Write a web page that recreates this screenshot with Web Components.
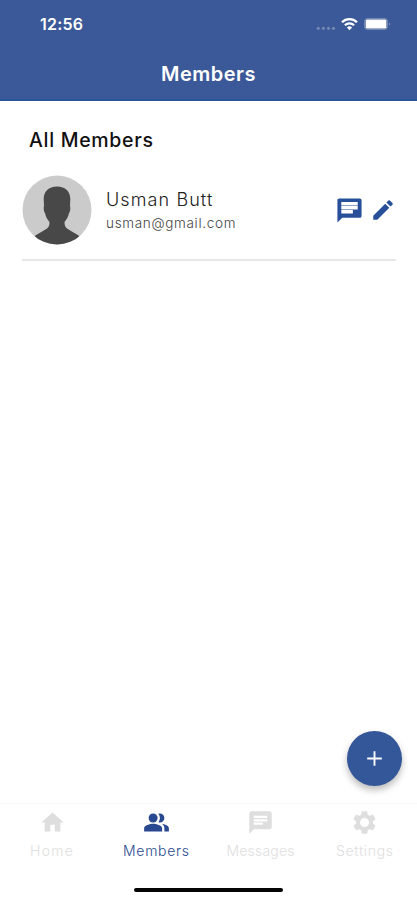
<!DOCTYPE html>
<html lang="en">
<head>
<meta charset="utf-8">
<title>Members</title>
<style>
  body {
    margin: 0;
    background: #fff;
    font-family: Inter, "Open Sans", sans-serif;
  }
</style>
</head>
<body>
<members-screen></members-screen>

<script>
const icons = {
  chat: '<path d="M20 2H4c-1.1 0-2 .9-2 2v18l4-4h14c1.1 0 2-.9 2-2V4c0-1.1-.9-2-2-2zM6 9h12v2H6V9zm8 5H6v-2h8v2zm4-6H6V6h12v2z"/>',
  message: '<path d="M20.500 2h-17C2.700 2 2 2.700 2 3.500V22l4-4h14.500c.8 0 1.500-.7 1.500-1.500v-13c0-.8-.7-1.500-1.500-1.500zM5.200 4.900h13.600v3H5.200zM5.200 8.200h13.600v3H5.200zM5.200 11.500h9.600v3H5.200z"/>',
  edit: '<path d="M3 17.25V21h3.75L17.81 9.94l-3.75-3.75L3 17.25zM20.71 7.04a1 1 0 0 0 0-1.41l-2.34-2.34a1 1 0 0 0-1.41 0l-1.83 1.83 3.75 3.75 1.83-1.83z"/>',
  home: '<path d="M10 20v-6h4v6h5v-8h3L12 3 2 12h3v8z"/>',
  people: '<path d="M16.67 13.13C18.04 14.06 19 15.32 19 17v3h4v-3c0-2.18-3.57-3.47-6.33-3.87z"/><circle cx="9" cy="8" r="4"/><path d="M15 12c2.21 0 4-1.79 4-4s-1.79-4-4-4c-.47 0-.91.1-1.33.24C14.5 5.27 15 6.58 15 8s-.5 2.73-1.33 3.76c.42.14.86.24 1.33.24zM9 13c-2.67 0-8 1.34-8 4v3h16v-3c0-2.66-5.33-4-8-4z"/>',
  settings: '<path d="M19.43 12.98c.04-.32.07-.64.07-.98s-.03-.66-.07-.98l2.11-1.65c.19-.15.24-.42.12-.64l-2-3.46c-.12-.22-.39-.3-.61-.22l-2.49 1c-.52-.4-1.08-.73-1.69-.98l-.38-2.65C14.46 2.18 14.25 2 14 2h-4c-.25 0-.46.18-.49.42l-.38 2.65c-.61.25-1.17.59-1.69.98l-2.49-1c-.23-.09-.49 0-.61.22l-2 3.46c-.13.22-.07.49.12.64l2.11 1.65c-.04.32-.07.65-.07.98s.03.66.07.98l-2.11 1.65c-.19.15-.24.42-.12.64l2 3.46c.12.22.39.3.61.22l2.49-1c.52.4 1.08.73 1.69.98l.38 2.65c.03.24.24.42.49.42h4c.25 0 .46-.18.49-.42l.38-2.65c.61-.25 1.17-.59 1.69-.98l2.49 1c.23.09.49 0 .61-.22l2-3.46c.12-.22.07-.49-.12-.64l-2.11-1.65zM12 16c-2.200 0-4-1.800-4-4s1.800-4 4-4 4 1.800 4 4-1.800 4-4 4z"/>',
  add: '<path d="M19 12.900h-6.100V19h-1.800v-6.100H5v-1.800h6.100V5h1.800v6.100H19z"/>',
};

class AppIcon extends HTMLElement {
  constructor() {
    super();
    this.attachShadow({ mode: 'open' });
  }

  connectedCallback() {
    this.shadowRoot.innerHTML = `
      <style>
        :host { display: block; width: 27px; height: 27px; flex: none; }
        svg { display: block; width: 100%; height: 100%; fill: currentColor; }
      </style>
      <svg viewBox="0 0 24 24">${icons[this.getAttribute('name')]}</svg>
    `;
  }
}

class StatusBar extends HTMLElement {
  constructor() {
    super();
    this.attachShadow({ mode: 'open' });
    this.shadowRoot.innerHTML = `
      <style>
        :host {
          display: flex;
          justify-content: space-between;
          height: 48px;
          padding: 0 27px 0 40px;
          color: #fff;
        }
        .time { font-size: 16px; font-weight: 600; line-height: 49px; letter-spacing: 0.2px; }
        svg { display: block; margin-top: 14px; }
      </style>
      <span class="time">12:56</span>
      <svg width="74" height="20" viewBox="316 14 74 20" fill="#fff">
        <g opacity="0.28">
          <circle cx="318.3" cy="28.3" r="1.6"/><circle cx="323.4" cy="28.3" r="1.6"/>
          <circle cx="328.5" cy="28.3" r="1.6"/><circle cx="333.5" cy="28.3" r="1.6"/>
        </g>
        <g fill="none" stroke="#fff" stroke-width="2.2">
          <path d="M342 22.2a10.5 10.5 0 0 1 15 0"/>
          <path d="M344.9 25.2a6.5 6.5 0 0 1 9.2 0"/>
        </g>
        <path d="M346.9 27.4a3.8 3.8 0 0 1 5.2 0l-2.6 2.8z"/>
        <rect x="364.5" y="18.5" width="23" height="11" rx="3" fill="none" stroke="#fff" stroke-opacity="0.3"/>
        <rect x="365.700" y="19.4" width="20.7" height="9.2" rx="1.4"/>
        <path d="M389 22.5q1.6 1.5 0 3z" opacity="0.5"/>
      </svg>
    `;
  }
}

class AppHeader extends HTMLElement {
  constructor() {
    super();
    this.attachShadow({ mode: 'open' });
    this.shadowRoot.innerHTML = `
      <style>
        :host {
          display: block;
          box-sizing: border-box;
          height: 101px;
          background: #3b5998;
          border-bottom: 2px solid #28549a;
        }
        h1 {
          margin: 0;
          color: #fff;
          font-size: 20px;
          font-weight: 600;
          line-height: 52px;
          letter-spacing: 0.5px;
          text-align: center;
        }
      </style>
      <status-bar></status-bar>
      <h1><slot></slot></h1>
    `;
  }
}

class MemberRow extends HTMLElement {
  constructor() {
    super();
    this.attachShadow({ mode: 'open' });
    this.shadowRoot.innerHTML = `
      <style>
        :host {
          display: flex;
          align-items: center;
          box-sizing: border-box;
          height: 86px;
          margin: 0 21px 0 22px;
          padding-bottom: 14px;
          border-bottom: 2px solid #e5e7e9;
        }
        .avatar { flex: none; width: 70px; height: 70px; }
        .details { flex: 1; margin-left: 14px; padding-top: 2px; white-space: nowrap; }
        .name { color: #222; font-size: 18px; font-weight: 350; line-height: 24px; letter-spacing: 1.1px; }
        .email { color: #444; font-size: 13.5px; font-weight: 300; line-height: 22px; letter-spacing: 0.68px; }
        .actions { display: flex; align-items: center; gap: 6px; color: #28509a; }
        .message { width: 29px; height: 29px; }
        .edit { width: 26px; height: 26px; }
      </style>
      <svg class="avatar" viewBox="0 0 70 70">
        <defs><clipPath id="round"><circle cx="35" cy="35" r="34.5"/></clipPath></defs>
        <g clip-path="url(#round)">
          <rect width="70" height="70" fill="#cbcbcb"/>
          <path fill="#484848" d="M35 11.500c-8.500 0-13.300 5-13.300 12.500l.3 7c-.6 1.500-.3 6 1 7 .8 4 2.300 6.500 4.500 9 0 3-.5 5-2.500 6.500-4 3-9 4.500-13.500 8.500V72h47V62c-4.500-4-9.500-5.500-13.500-8.500-2-1.500-2.500-3.500-2.500-6.500 2.200-2.500 3.700-5 4.500-9 1.300-1 1.600-5.500 1-7l.3-7c0-7.500-4.800-12.500-13.300-12.500z"/>
        </g>
      </svg>
      <div class="details">
        <div class="name"><slot name="name"></slot></div>
        <div class="email"><slot name="email"></slot></div>
      </div>
      <div class="actions">
        <app-icon class="message" name="message"></app-icon>
        <app-icon class="edit" name="edit"></app-icon>
      </div>
    `;
  }
}

class FloatingButton extends HTMLElement {
  constructor() {
    super();
    this.attachShadow({ mode: 'open' });
    this.shadowRoot.innerHTML = `
      <style>
        :host {
          display: grid;
          place-items: center;
          width: 55px;
          height: 55px;
          border-radius: 50%;
          background: #345799;
          box-shadow: 0 4px 7px rgba(0, 0, 0, 0.27);
          color: #fff;
        }
        app-icon { width: 25px; height: 25px; }
      </style>
      <app-icon name="add"></app-icon>
    `;
  }
}

class TabItem extends HTMLElement {
  constructor() {
    super();
    this.attachShadow({ mode: 'open' });
    this.shadowRoot.innerHTML = `
      <style>
        :host {
          display: flex;
          flex-direction: column;
          align-items: center;
          color: #dedede;
          font-size: 14px;
          font-weight: 350;
          line-height: 20px;
          letter-spacing: 0.7px;
        }
        :host([active]) { color: #28498f; }
        :host([icon="home"]) { letter-spacing: 1.3px; }
        :host([icon="chat"]) { letter-spacing: 0.2px; }
        app-icon { margin-bottom: 5px; }
      </style>
      <app-icon name="${this.getAttribute('icon')}"></app-icon>
      <span><slot></slot></span>
    `;
  }
}

class TabBar extends HTMLElement {
  constructor() {
    super();
    this.attachShadow({ mode: 'open' });
    this.shadowRoot.innerHTML = `
      <style>
        :host {
          display: block;
          box-sizing: border-box;
          height: 97px;
          padding-top: 5px;
          border-top: 1px solid #f8f8f8;
        }
        nav { display: grid; grid-template-columns: repeat(4, 1fr); height: 79px; }
        .indicator { width: 149px; height: 4px; margin: 0 auto; border-radius: 2px; background: #050505; }
      </style>
      <nav><slot></slot></nav>
      <div class="indicator"></div>
    `;
  }
}

class MembersScreen extends HTMLElement {
  constructor() {
    super();
    this.attachShadow({ mode: 'open' });
    this.shadowRoot.innerHTML = `
      <style>
        :host {
          position: relative;
          display: flex;
          flex-direction: column;
          width: 417px;
          height: 900px;
          overflow: hidden;
        }
        main { flex: 1; }
        h2 {
          margin: 23px 0 0 29px;
          color: #111;
          font-size: 19.5px;
          font-weight: 500;
          line-height: 32px;
          letter-spacing: 0.7px;
        }
        member-row { margin-top: 19px; }
        floating-button { position: absolute; right: 15px; bottom: 114px; }
      </style>
      <app-header>Members</app-header>
      <main>
        <h2>All Members</h2>
        <member-row>
          <span slot="name">Usman Butt</span>
          <span slot="email">usman@gmail.com</span>
        </member-row>
      </main>
      <floating-button></floating-button>
      <tab-bar>
        <tab-item icon="home">Home</tab-item>
        <tab-item icon="people" active>Members</tab-item>
        <tab-item icon="chat">Messages</tab-item>
        <tab-item icon="settings">Settings</tab-item>
      </tab-bar>
    `;
  }
}

customElements.define('app-icon', AppIcon);
customElements.define('status-bar', StatusBar);
customElements.define('app-header', AppHeader);
customElements.define('member-row', MemberRow);
customElements.define('floating-button', FloatingButton);
customElements.define('tab-item', TabItem);
customElements.define('tab-bar', TabBar);
customElements.define('members-screen', MembersScreen);
</script>
</body>
</html>
